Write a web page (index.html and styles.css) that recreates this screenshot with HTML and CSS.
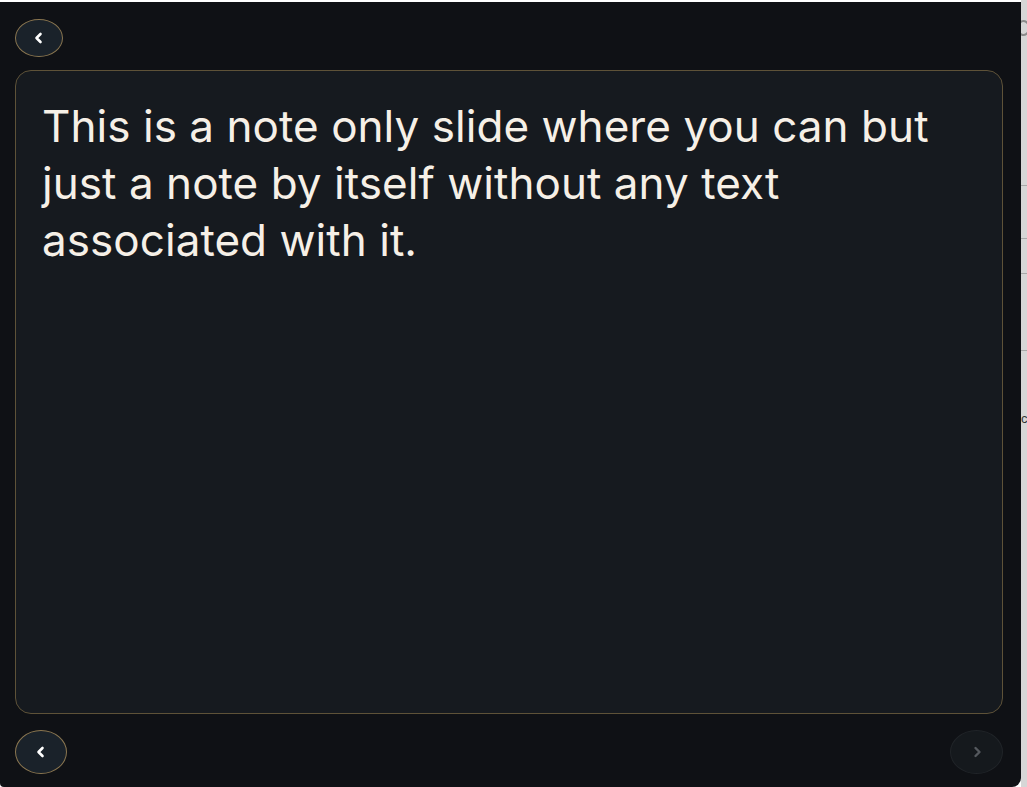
FILE: index.html
```html
<!DOCTYPE html>
<html>
<head>
<meta charset="utf-8">
<link rel="stylesheet" href="styles.css">
</head>
<body>
<div class="topstrip"></div>
<div class="frame">
  <div class="panel">
    <div class="toprow">
      <button class="navbtn back-top" aria-label="Back">
        <svg width="12" height="14" viewBox="0 0 12 14"><path d="M7.5 3 L3.5 7 L7.5 11" fill="none" stroke="#ffffff" stroke-width="2.6" stroke-linecap="round" stroke-linejoin="round"/></svg>
      </button>
    </div>
    <div class="card">
      <p class="note">This is a note only slide where you can but just a note by itself without any text associated with it.</p>
    </div>
    <div class="bottomrow">
      <button class="navbtn prev" aria-label="Previous">
        <svg width="12" height="14" viewBox="0 0 12 14"><path d="M7.5 3 L3.5 7 L7.5 11" fill="none" stroke="#ffffff" stroke-width="2.6" stroke-linecap="round" stroke-linejoin="round"/></svg>
      </button>
      <button class="navbtn next" aria-label="Next">
        <svg width="12" height="14" viewBox="0 0 12 14"><path d="M4.5 3 L8.5 7 L4.5 11" fill="none" stroke="#55595e" stroke-width="2.4" stroke-linecap="round" stroke-linejoin="round"/></svg>
      </button>
    </div>
  </div>
  <div class="side">
    <div class="side-icon"></div>
    <div class="side-line l1"></div>
    <div class="side-line l2"></div>
    <div class="side-line l3"></div>
    <div class="side-line l4"></div>
    <span class="side-char">c</span>
  </div>
</div>
</body>
</html>
```
FILE: styles.css
```css
html, body {
  margin: 0;
  padding: 0;
  background: #ffffff;
  overflow: hidden;
}
body {
  width: 1027px;
  height: 787px;
  font-family: Inter, "Noto Sans", sans-serif;
}
.topstrip {
  height: 2px;
  background: #ffffff;
}
.frame {
  display: flex;
  height: 785px;
}
.panel {
  width: 1021px;
  height: 785px;
  background: #0f1115;
  border-bottom-right-radius: 9px;
  border-bottom-left-radius: 4px;
  box-sizing: border-box;
  padding: 17px 18px 0 15px;
  display: flex;
  flex-direction: column;
}
.toprow {
  height: 38px;
  display: flex;
}
.navbtn {
  border: 1px solid #8a7650;
  background: #1a222a;
  border-radius: 50%;
  padding: 0;
  display: flex;
  align-items: center;
  justify-content: center;
  cursor: pointer;
  box-sizing: border-box;
}
.back-top {
  width: 48px;
  height: 38px;
}
.card {
  margin-top: 13px;
  height: 644px;
  box-sizing: border-box;
  border: 1px solid #5e5238;
  border-radius: 16px;
  background: #161a1f;
  padding: 27px 40px 0 26px;
}
.note {
  margin: 0;
  color: #f6f0e7;
  font-size: 44px;
  line-height: 57px;
  font-weight: 400;
  letter-spacing: 0.05px;
}
.bottomrow {
  margin-top: 16px;
  display: flex;
  justify-content: space-between;
}
.prev {
  width: 52px;
  height: 44px;
}
.next {
  width: 53px;
  height: 44px;
  background: #15191d;
  border: 1px solid #202428;
}
.side {
  flex: 1;
  height: 787px;
  margin-top: -2px;
  background: #d6d6d6;
  position: relative;
  overflow: hidden;
}
.side-icon {
  position: absolute;
  left: -4px;
  top: 20px;
  width: 9px;
  height: 12px;
  border-radius: 50%;
  border: 2px solid #8a8a8a;
}
.side-line {
  position: absolute;
  left: 0;
  right: 0;
  height: 1px;
  background: #a8a8a8;
}
.l1 { top: 185px; }
.l2 { top: 238px; }
.l3 { top: 273px; }
.l4 { top: 350px; }
.side-char {
  position: absolute;
  left: 0;
  top: 411px;
  font-size: 13px;
  color: #333333;
  font-family: "Liberation Sans", sans-serif;
}
```
